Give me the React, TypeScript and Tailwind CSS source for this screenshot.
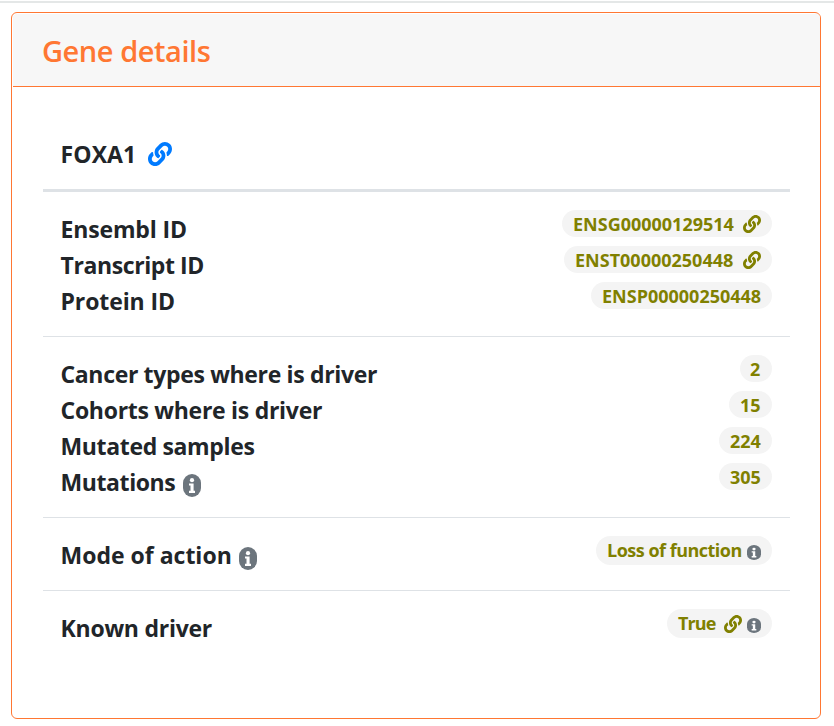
import type { ReactNode } from "react";
import { FaLink } from "react-icons/fa";

function Info({ className }: { className: string }) {
  return (
    <svg viewBox="0 0 18 23" preserveAspectRatio="none" className={`shrink-0 ${className}`}>
      <rect width="18" height="23" rx="9" fill="#6c757d" />
      <circle cx="9" cy="6.2" r="2.1" fill="#fff" />
      <path d="M6 9.4h4.6v7.4H12V19H6v-2.2h1.5v-5.2H6z" fill="#fff" />
    </svg>
  );
}

function Label({ children, spacing, width = "", icon }: { children: string; spacing: string; width?: string; icon?: boolean }) {
  return (
    <div className="-ml-[0.5px] flex h-9 items-center text-[23px]/9 font-bold whitespace-nowrap text-[#212529]">
      <span className={`pt-[2px] ${spacing} ${width}`}>{children}</span>
      {icon && <Info className="mt-[9px] h-[23px] w-[18px]" />}
    </div>
  );
}

function Pill({ text, width, spacing = "", children }: { text: string; width: string; spacing?: string; children?: ReactNode }) {
  return (
    <div className="flex h-9 items-start justify-end">
      <div
        className={`flex items-center rounded-full bg-[#f4f4f4] text-lg/[27px] font-bold whitespace-nowrap text-[#808000] ${width}`}
      >
        <span className={spacing}>{text}</span>
        {children}
      </div>
    </div>
  );
}

function Section({ left, right, last }: { left: ReactNode; right?: ReactNode; last?: boolean }) {
  return (
    <section className={`flex justify-between px-[18px] py-[18px] ${last ? "" : "border-b border-[#dee2e6]"}`}>
      <div>{left}</div>
      <div>{right}</div>
    </section>
  );
}

export default function App() {
  return (
    <main className="h-[726px] w-[834px] bg-white pt-px font-['Open_Sans','Noto_Sans',sans-serif]">
      <div className="h-[2px] bg-[#e4e7e7]" />
      <article className="mt-[9px] ml-[11px] h-[707px] w-[810px] rounded-[6px] border border-[#ff7733]">
        <header className="mt-px ml-px flex h-[73px] items-center rounded-t-[4px] border-b border-[#ff7733] bg-[#f7f7f7] pt-[2px] pl-[29px]">
          <h1 className="text-[29px]/9 font-[550] tracking-[-0.45px] text-[#ff7733]">Gene details</h1>
        </header>
        <div className="mt-[30px] ml-[31px] w-[747px]">
          <div className="flex h-[75px] items-center border-b-[3px] border-[#dee2e6] px-[18px]">
            <div className="w-[87px]">
              <Label spacing="tracking-[0.1px]">FOXA1</Label>
            </div>
            <FaLink className="mt-[2px] size-6 text-[#007bff]" />
          </div>
          <Section
            left={
              <>
                <Label spacing="tracking-[-0.15px]">Ensembl ID</Label>
                <Label spacing="tracking-[-0.4px]">Transcript ID</Label>
                <Label spacing="tracking-[-0.1px]">Protein ID</Label>
              </>
            }
            right={
              <>
                <Pill text="ENSG00000129514" spacing="pt-px pl-[11px]" width="h-[27px] w-[210px]">
                  <FaLink className="mr-[11px] ml-auto size-[18px]" />
                </Pill>
                <Pill text="ENST00000250448" spacing="pt-px pl-[11px]" width="h-[27px] w-[208px]">
                  <FaLink className="mr-[11px] ml-auto size-[18px]" />
                </Pill>
                <Pill text="ENSP00000250448" spacing="pt-px pl-[11px]" width="h-[27px] w-[181px]" />
              </>
            }
          />
          <Section
            left={
              <>
                <Label spacing="tracking-[-0.34px]">Cancer types where is driver</Label>
                <Label spacing="tracking-[-0.28px]">Cohorts where is driver</Label>
                <Label spacing="tracking-[-0.35px]">Mutated samples</Label>
                <Label spacing="tracking-[-0.4px]" width="w-[122px]" icon>Mutations</Label>
              </>
            }
            right={
              <>
                <Pill text="2" spacing="pt-px pl-[10px]" width="h-[27px] w-[32px]" />
                <Pill text="15" spacing="pt-px pl-[11px]" width="h-[27px] w-[43px]" />
                <Pill text="224" spacing="pt-px pl-[11px]" width="h-[27px] w-[53px]" />
                <Pill text="305" spacing="pt-px pl-[11px]" width="h-[27px] w-[53px]" />
              </>
            }
          />
          <Section
            left={<Label spacing="tracking-[0px]" width="w-[178px]" icon>Mode of action</Label>}
            right={
              <Pill text="Loss of function" spacing="pl-[11px] tracking-[-0.5px]" width="h-[29px] w-[176px]">
                <Info className="mt-[4px] mr-[11px] ml-auto h-[15px] w-[14px]" />
              </Pill>
            }
          />
          <Section
            last
            left={<Label spacing="tracking-[-0.25px]">Known driver</Label>}
            right={
              <Pill text="True" spacing="pl-[11px] tracking-[-0.9px]" width="h-[29px] w-[105px]">
                <FaLink className="ml-auto size-[18px]" />
                <Info className="mt-[4px] mr-[11px] ml-[5px] h-[15px] w-[14px]" />
              </Pill>
            }
          />
        </div>
      </article>
    </main>
  );
}
